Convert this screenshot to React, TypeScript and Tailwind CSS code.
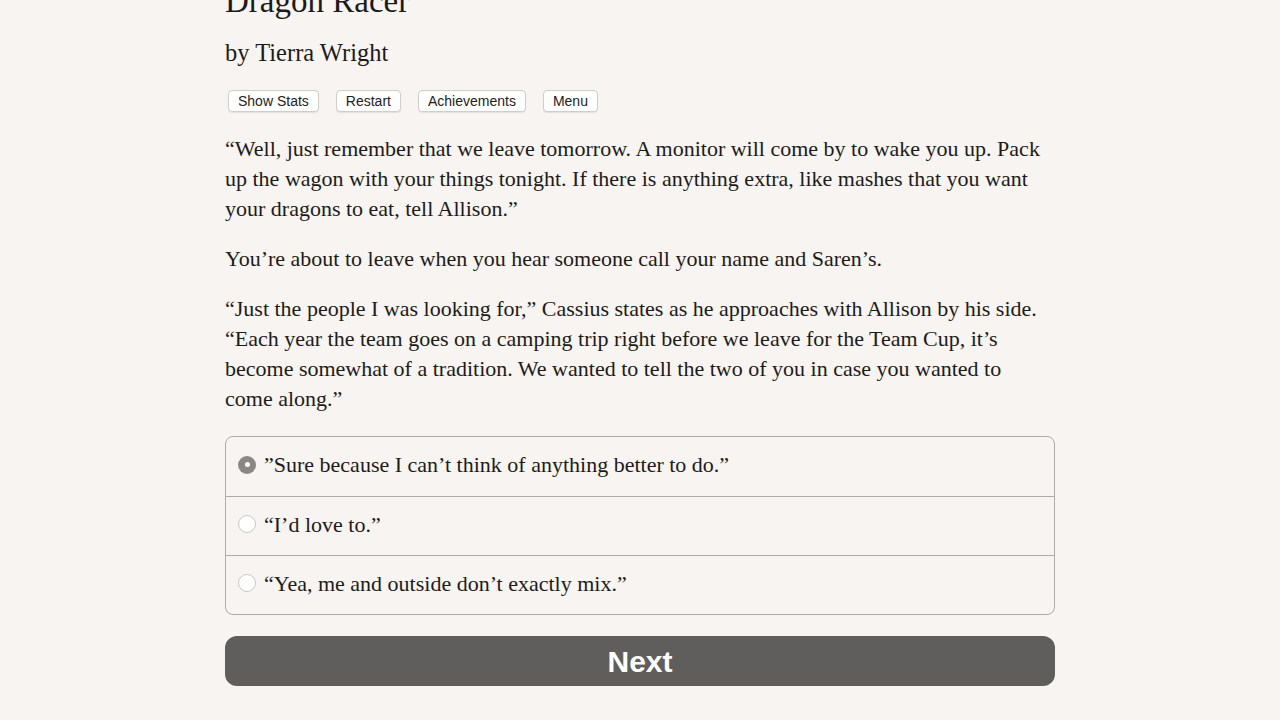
import React from "react";

const serif = { fontFamily: '"Liberation Serif", "DejaVu Serif", serif' };
const sans = { fontFamily: '"Liberation Sans", Arial, sans-serif' };

function Radio({ checked }: { checked?: boolean }) {
  return checked ? (
    <span className="inline-flex h-[18px] w-[18px] shrink-0 items-center justify-center rounded-full bg-[#8a8887]">
      <span className="h-[5px] w-[5px] rounded-full bg-white" />
    </span>
  ) : (
    <span className="inline-block h-[18px] w-[18px] shrink-0 rounded-full border border-[#c9c7c5] bg-white" />
  );
}

export default function App() {
  const choices = [
    { t: "\u201DSure because I can\u2019t think of anything better to do.\u201D", c: true },
    { t: "\u201CI\u2019d love to.\u201D", c: false },
    { t: "\u201CYea, me and outside don\u2019t exactly mix.\u201D", c: false },
  ];
  return (
    <div className="h-[720px] w-[1280px] overflow-hidden bg-[#f7f4f1] text-[#1d1b1a]" style={serif}>
      <div className="mx-auto -mt-[19px] w-[830px]">
        <h1 className="m-0 h-[40px] text-[33px] leading-[40px] text-[#1d1b1a]">Dragon Racer</h1>
        <h2 className="mt-[15px] text-[24.5px] leading-[34px]">by Tierra Wright</h2>
        <div className="mt-[20px] flex gap-[17px] pl-[3px] text-[14px]" style={sans}>
          {["Show Stats", "Restart", "Achievements", "Menu"].map((b) => (
            <button
              key={b}
              className="h-[22px] rounded-[4px] border border-[#d0cdca] bg-white px-[9px] leading-[20px] text-[#222] shadow-[0_1px_1px_rgba(0,0,0,0.08)]"
            >
              {b}
            </button>
          ))}
        </div>
        <div className="mt-[22px] pr-[10px] text-[22px] leading-[30px]">
          <p>
            &ldquo;Well, just remember that we leave tomorrow. A monitor will come by to wake you up. Pack up the
            wagon with your things tonight. If there is anything extra, like mashes that you want your dragons to eat,
            tell Allison.&rdquo;
          </p>
          <p className="mt-[20px]">You&rsquo;re about to leave when you hear someone call your name and Saren&rsquo;s.</p>
          <p className="mt-[20px]">
            &ldquo;Just the people I was looking for,&rdquo; Cassius states as he approaches with Allison by his side.
            &ldquo;Each year the team goes on a camping trip right before we leave for the Team Cup, it&rsquo;s become
            somewhat of a tradition. We wanted to tell the two of you in case you wanted to come along.&rdquo;
          </p>
        </div>
        <div className="mt-[22px] overflow-hidden rounded-[8px] border border-[#aeacaa]">
          {choices.map((ch, i) => (
            <div
              key={i}
              className={`flex h-[59px] items-center gap-[8px] pb-[4px] pl-[12px] text-[22px] ${i > 0 ? "border-t border-[#aeacaa]" : ""}`}
            >
              <Radio checked={ch.c} />
              <span>{ch.t}</span>
            </div>
          ))}
        </div>
        <button
          className="mt-[21px] flex h-[50px] w-full items-center justify-center rounded-[12px] bg-[#5f5e5c] text-[30px] font-bold text-white"
          style={sans}
        >
          Next
        </button>
      </div>
    </div>
  );
}
